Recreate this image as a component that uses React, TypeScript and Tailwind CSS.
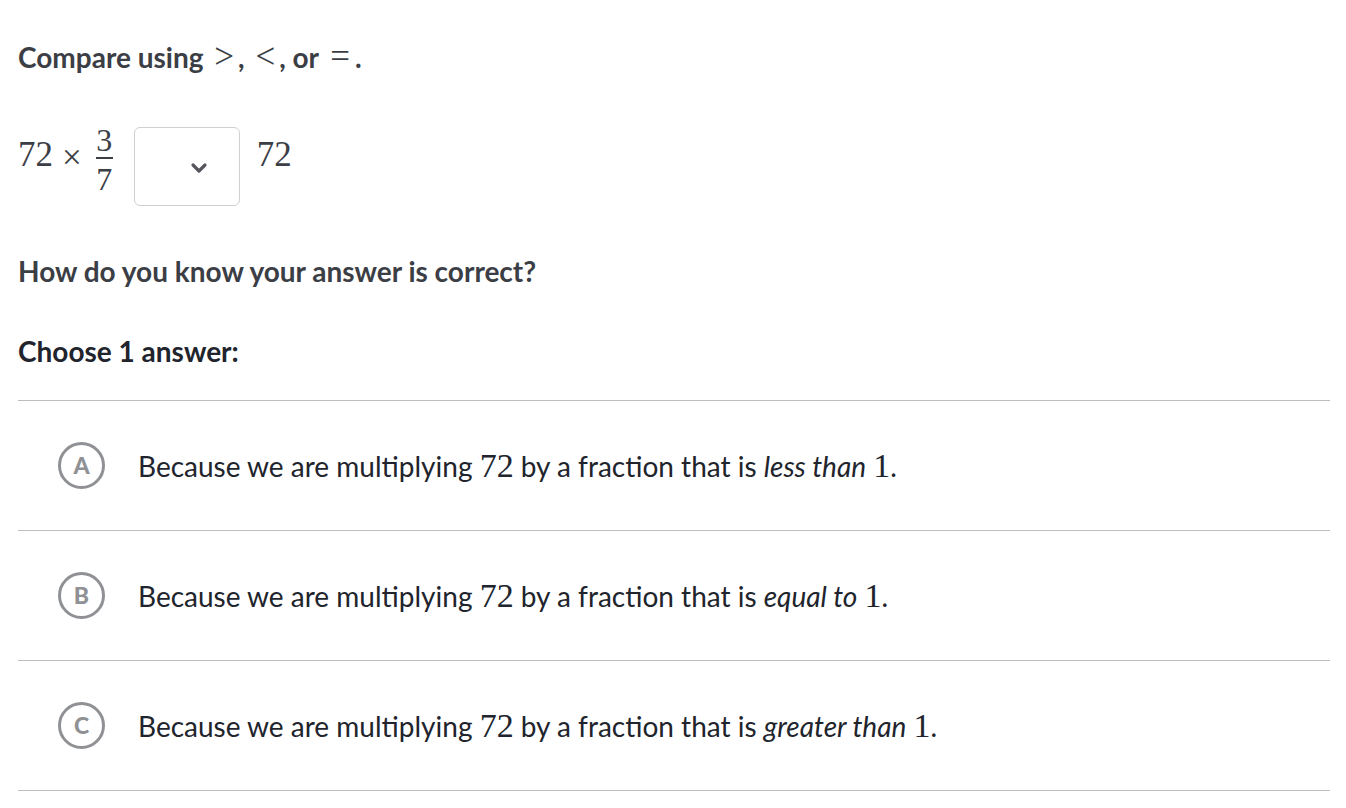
import React from "react";

const lato = { fontFamily: "Lato, 'Noto Sans', sans-serif" };
const serif = "font-['Liberation_Serif','DejaVu_Serif',serif]";

function Choice({ letter, em }: { letter: string; em: string }) {
  return (
    <div className="flex h-[130px] items-center border-b border-[#bdbdbd]">
      <div className="ml-[40px] flex h-[47px] w-[47px] shrink-0 items-center justify-center rounded-full border-[3px] border-[#8f9194] text-[23px] font-black leading-none text-[#8f9194]">
        {letter}
      </div>
      <div className="ml-[33px] text-[28px] leading-[40px] text-[#21242c]">
        Because we are multiplying <span className={`${serif} text-[34px]`}>72</span> by a fraction that is{" "}
        <i>{em}</i> <span className={`${serif} text-[34px]`}>1</span>.
      </div>
    </div>
  );
}

export default function App() {
  return (
    <div className="min-h-[808px] bg-white pl-[18px] pr-[16px] pt-[37px]" style={lato}>
      <h2 className="text-[28px] font-bold leading-[40px] text-[#3b3e45]">
        Compare using{" "}
        <span className={`${serif} mx-[4px] text-[35px] font-normal`}>&gt;</span>,{" "}
        <span className={`${serif} mx-[4px] text-[35px] font-normal`}>&lt;</span>, or{" "}
        <span className={`${serif} mx-[5px] text-[35px] font-normal`}>=</span>.
      </h2>

      <div className={`mt-[50px] flex h-[79px] items-center ${serif} text-[35px] leading-[40px] text-[#3b3e45]`}>
        <span className="mb-[24px]">72</span>
        <span className="mb-[18px] ml-[9px]">×</span>
        <span className="mb-[14px] ml-[14px] flex flex-col items-center leading-[30px]">
          <span className="text-[32px]">3</span>
          <span className="mb-[5px] mt-[2px] h-[1.5px] w-[17px] bg-[#3b3e45]" />
          <span className="text-[32px]">7</span>
        </span>
        <div className="ml-[21px] flex h-[79px] w-[106px] items-center justify-center rounded-[6px] border-[1.5px] border-[#cfd0d2]">
          <svg width="18" height="12" viewBox="0 0 18 12" className="ml-[24px] mt-[2px]">
            <path d="M3 3l6 6 6-6" fill="none" stroke="#55575d" strokeWidth="3.2" strokeLinecap="round" strokeLinejoin="round" />
          </svg>
        </div>
        <span className="mb-[24px] ml-[17px]">72</span>
      </div>

      <p className="mt-[45px] text-[28px] font-bold leading-[40px] text-[#3b3e45]">How do you know your answer is correct?</p>

      <p className="mt-[40px] text-[28px] font-bold leading-[40px] text-[#21242c]">Choose 1 answer:</p>

      <div className="mt-[29px] border-t border-[#bdbdbd]">
        <Choice letter="A" em="less than" />
        <Choice letter="B" em="equal to" />
        <Choice letter="C" em="greater than" />
      </div>
    </div>
  );
}
